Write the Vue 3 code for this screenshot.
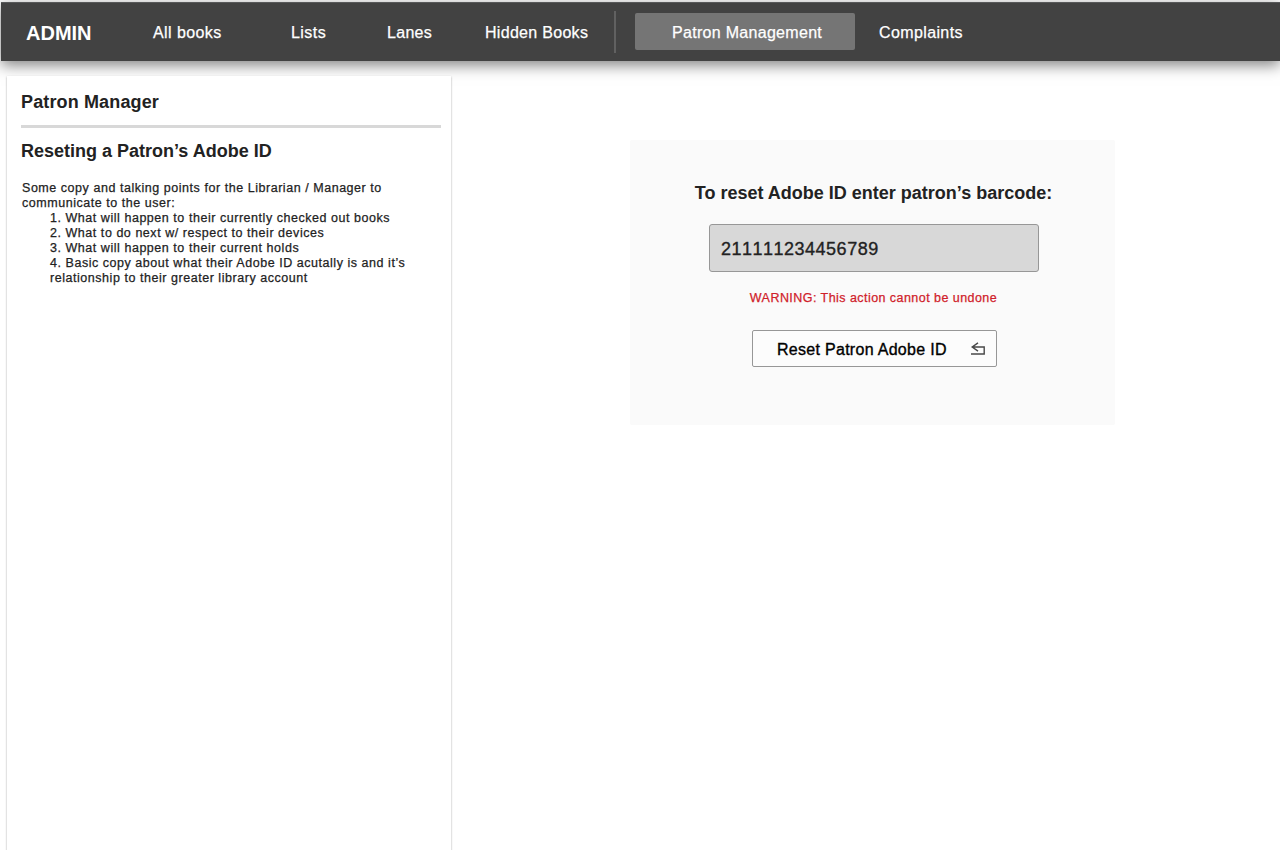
<script setup>
import { ref } from 'vue'

const barcode = ref('211111234456789')
const catalogLinks = [
  { label: 'All books', name: 'all' },
  { label: 'Lists', name: 'lists' },
  { label: 'Lanes', name: 'lanes' },
  { label: 'Hidden Books', name: 'hidden' },
]
const points = [
  'What will happen to their currently checked out books',
  'What to do next w/ respect to their devices',
  'What will happen to their current holds',
  'Basic copy about what their Adobe ID acutally is and it’s relationship to their greater library account',
]
</script>

<template>
  <div class="page">
    <header class="topbar">
      <div class="brand">ADMIN</div>
      <nav class="links">
        <a v-for="l in catalogLinks" :key="l.name" :class="['link', l.name]">{{ l.label }}</a>
        <span class="divider"></span>
        <a class="link active">Patron Management</a>
        <a class="link complaints">Complaints</a>
      </nav>
    </header>
    <div class="content">
      <aside class="sidebar">
        <h1>Patron Manager</h1>
        <hr />
        <h2>Reseting a Patron’s Adobe ID</h2>
        <div class="copy">
          <p class="intro">Some copy and talking points for the Librarian / Manager to communicate to the user:</p>
          <div class="points">
            <p v-for="(p, i) in points" :key="i">{{ i + 1 }}. {{ p }}</p>
          </div>
        </div>
      </aside>
      <main class="main">
        <section class="panel">
          <h3>To reset Adobe ID enter patron’s barcode:</h3>
          <input v-model="barcode" class="barcode" type="text" />
          <p class="warning">WARNING: This action cannot be undone</p>
          <button class="reset">
            <span>Reset Patron Adobe ID</span>
            <svg width="16" height="14" viewBox="0 0 16 14" fill="none" stroke="#484848" stroke-width="1.4">
              <path d="M8 .9 2.2 5 8 9.1M2.4 5H14.2V12H1" />
            </svg>
          </button>
        </section>
      </main>
    </div>
  </div>
</template>

<style>
body { background: #fff; overflow: hidden; }
</style>

<style scoped>
* { box-sizing: border-box; }
.page {
  height: 850px;
  padding: 2px 0 0 1px;
  overflow: hidden;
  background: #fff;
  font-family: "Liberation Sans", Arial, sans-serif;
  color: #222;
}
h1, h2, h3, p { margin: 0; }
.topbar {
  height: 59px;
  display: flex;
  align-items: center;
  background: #424242;
  border-top: 1px solid #58595a;
  box-shadow: 0 4px 14px rgba(0, 0, 0, .5);
  color: #fff;
}
.brand { width: 126px; padding-left: 25px; font: bold 20px/24px "Liberation Sans", Arial, sans-serif; flex: none; margin-top: 1px; }
.links { display: flex; align-items: center; height: 100%; }
.link {
  flex: none;
  padding-top: 2px;
  font-size: 16px;
  line-height: 20px;
  letter-spacing: .3px;
  white-space: nowrap;
  -webkit-text-stroke: .25px #fff;
}
.all { width: 164px; padding-left: 26px; letter-spacing: .42px; }
.lists { width: 96px; letter-spacing: .45px; }
.lanes { width: 98px; }
.hidden { width: 129px; }
.divider { width: 2px; height: 42px; background: #616161; margin-right: 19px; }
.active { width: 220px; height: 37px; margin-top: -2px; padding: 10px 0 0 37px; background: #757575; border-radius: 2px; line-height: 19px; }
.complaints { padding-left: 24px; letter-spacing: .38px; }
.content { display: flex; height: 789px; padding: 15px 0 0 6px; }
.sidebar {
  flex: none;
  width: 444px;
  height: 800px;
  padding: 15px 10px 0 14px;
  background: #fff;
  box-shadow: 0 1px 2px rgba(0, 0, 0, .35);
}
h1, h2, h3 { font-size: 18px; line-height: 22px; font-weight: bold; white-space: nowrap; }
h1 { letter-spacing: .14px; }
h3 { padding-left: 2px; }
hr { height: 3px; margin: 12px 0; border: 0; background: #d8d8d8; }
.copy { margin: 19px 0 0 1px; font-size: 12.5px; line-height: 15px; letter-spacing: .54px; -webkit-text-stroke: .25px #222; }
.intro { width: 390px; }
.points { padding-left: 28px; width: 410px; }
.main { flex: 1; padding: 64px 0 0 179px; }
.panel { width: 485px; height: 285px; padding: 42px 0 0; background: #fafafa; border-radius: 2px; display: flex; flex-direction: column; align-items: center; }
.barcode {
  width: 330px;
  height: 48px;
  margin: 20px 0 0 3px;
  padding: 2px 11px 0;
  border: 1px solid #979797;
  border-radius: 3px;
  background: #d8d8d8;
  color: #222;
  font: 18px "Liberation Sans", Arial, sans-serif;
  font-kerning: none;
  letter-spacing: .5px;
  -webkit-text-stroke: .35px #222;
}
.warning { margin: 19px 0 0 2px; font-size: 12.5px; line-height: 15px; letter-spacing: .45px; color: #d0212a; -webkit-text-stroke: .25px #d0212a; white-space: nowrap; }
.reset {
  width: 245px;
  height: 37px;
  margin: 24px 0 0 4px;
  padding: 1px 10px 0 24px;
  display: flex;
  align-items: center;
  justify-content: space-between;
  border: 1px solid #979797;
  border-radius: 2px;
  background: #fcfcfc;
  color: #000;
  font: 16px/20px "Liberation Sans", Arial, sans-serif;
  letter-spacing: .29px;
  -webkit-text-stroke: .35px #000;
  white-space: nowrap;
}
.reset span { padding-top: 1px; }
.reset svg { flex: none; }
</style>
